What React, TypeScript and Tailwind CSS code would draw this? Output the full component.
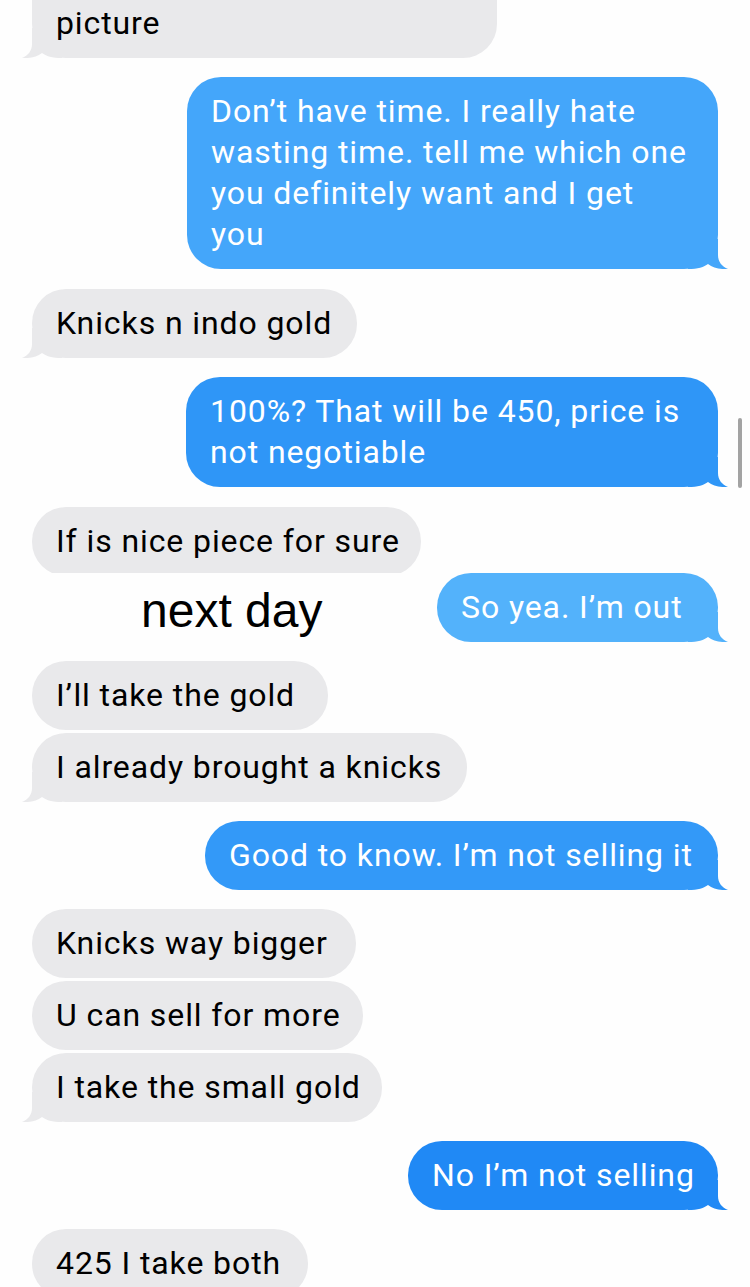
import type {ReactNode} from "react";

type BubbleProps = {
    side: "in" | "out";
    tail?: boolean;
    color?: string;
    width: string;
    children: ReactNode;
};

const Tail = ({side, color}: { side: "in" | "out"; color: string }) => {
    return (
        <svg width="40" height="30" viewBox="0 0 40 30"
             className={side === "in" ? "absolute bottom-0 -left-[10px]" : "absolute bottom-0 -right-[10px] -scale-x-100"}>
            <path d="M10 0 L10 16 C10 23 6 27.5 0 30 C8 30.5 15 29 20 25 C24 28 30 30 40 30 L40 0 Z" fill={color}/>
        </svg>
    )
}

const Bubble = ({side, tail, color, width, children}: BubbleProps) => {
    const fill = color ?? (side === "in" ? "#e9e9eb" : "#2f95f7");
    return (
        <div className={side === "in" ? "flex justify-start pl-[32px]" : "flex justify-end pr-[32px]"}>
            <div className={`relative ${width} rounded-[34px] px-[24px] py-[14px] text-[32px] leading-[41px] tracking-[0.9px] ${side === "in" ? "text-black" : "text-white"}`}
                 style={{backgroundColor: fill}}>
                {tail && <Tail side={side} color={fill}/>}
                <span className="relative whitespace-nowrap">{children}</span>
            </div>
        </div>
    )
}

const App = () => {
    return (
        <div className="relative h-[1287px] w-[750px] overflow-hidden bg-[#fefefe] font-['Roboto',sans-serif]">
            <div className="flex flex-col">
                <div className="-mt-[52px]">
                    <div className="flex justify-start pl-[32px]">
                        <div className="relative w-[465px] rounded-[34px] px-[24px] pb-[14px] pt-[55px] text-[32px] leading-[41px] tracking-[0.9px] text-black bg-[#e9e9eb]">
                            <Tail side="in" color="#e9e9eb"/>
                            <span className="relative">picture</span>
                        </div>
                    </div>
                </div>
                <div className="mt-[19px]">
                    <Bubble side="out" tail width="w-[531px]"
                            color="#44a6fa">Don’t have time. I really hate<br/>wasting time. tell me which one<br/>you definitely want and I get<br/>you</Bubble>
                </div>
                <div className="mt-[20px]">
                    <Bubble side="in" tail width="w-[325px]">Knicks n indo gold</Bubble>
                </div>
                <div className="mt-[19px]">
                    <Bubble side="out" tail width="w-[532px]" color="#2f96f7">100%? That will be 450, price is<br/>not negotiable</Bubble>
                </div>
                <div className="mt-[20px] h-[66px] overflow-hidden">
                    <Bubble side="in" width="w-[389px]">If is nice piece for sure</Bubble>
                </div>
                <div className="relative flex items-start justify-between">
                    <div className="pl-[141px] pt-[11px] font-['Liberation_Sans',sans-serif] text-[48px] leading-[54px] text-black">next day</div>
                    <Bubble side="out" tail width="w-[281px]" color="#53b2fb">So yea. I’m out</Bubble>
                </div>
                <div className="mt-[19px] flex flex-col gap-[3px]">
                    <Bubble side="in" width="w-[296px]">I’ll take the gold</Bubble>
                    <Bubble side="in" tail width="w-[435px]">I already brought a knicks</Bubble>
                </div>
                <div className="mt-[19px]">
                    <Bubble side="out" tail width="w-[513px]" color="#3399f8">Good to know. I’m not selling it</Bubble>
                </div>
                <div className="mt-[19px] flex flex-col gap-[3px]">
                    <Bubble side="in" width="w-[324px]">Knicks way bigger</Bubble>
                    <Bubble side="in" width="w-[331px]">U can sell for more</Bubble>
                    <Bubble side="in" tail width="w-[350px]">I take the small gold</Bubble>
                </div>
                <div className="mt-[19px]">
                    <Bubble side="out" tail width="w-[310px]" color="#2089f5">No I’m not selling</Bubble>
                </div>
                <div className="mt-[19px]">
                    <Bubble side="in" width="w-[276px]">425 I take both</Bubble>
                </div>
            </div>
            <div className="absolute left-[738px] top-[418px] h-[70px] w-[4px] rounded-full bg-[#a3a3a3]"/>
        </div>
    )
}

export default App
